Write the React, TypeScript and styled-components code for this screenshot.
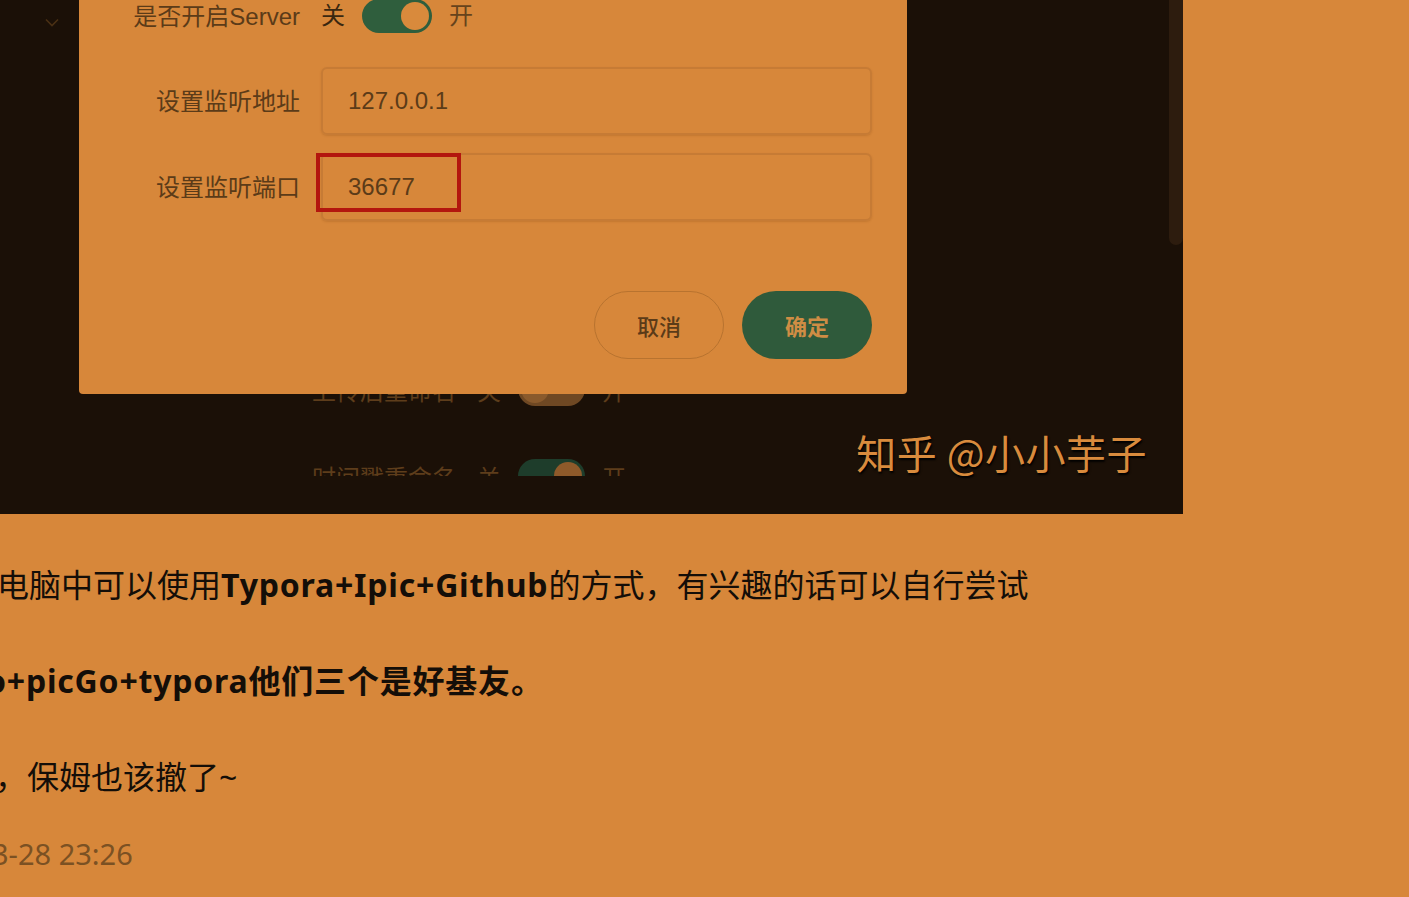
import React from "react";
import styled, { createGlobalStyle, css } from "styled-components";

const Global = createGlobalStyle`
  html, body { margin: 0; padding: 0; background: #d7873a; }
  body {
    font-family: "Noto Sans", "Noto Sans CJK SC", sans-serif;
    overflow: hidden;
  }
  #root { width: 1409px; height: 897px; }
`;

const Page = styled.main`
  width: 1409px;
  height: 897px;
  overflow: hidden;
  background: #d7873a;
`;

/* ---------- screenshot figure ---------- */
const Shot = styled.figure`
  position: relative;
  margin: 0;
  width: 1183px;
  height: 514px;
  background: #1b1007;
  overflow: hidden;
`;

const BackApp = styled.div`
  display: flex;
  height: 476px;
  overflow: hidden;
`;

const Sidebar = styled.aside`
  width: 312px;
  flex: none;
  padding: 10px 0 0 45px;
  box-sizing: border-box;
  color: #4a3014;
`;

const SettingsList = styled.div`
  display: flex;
  flex-direction: column;
  gap: 53px;
  padding-top: 372px;
`;

const BackRow = styled.div`
  display: flex;
  align-items: center;
  height: 34px;
  font-family: "Liberation Sans", "Noto Sans CJK SC", sans-serif;
  font-size: 24px;
  color: #5e3d1b;
`;

const BackLabel = styled.span`
  width: 144px;
  text-align: right;
  margin-right: 21px;
`;

const SwitchTrack = styled.span<{ $tone: "on" | "dimOff" | "dimOn"; $w: number }>`
  position: relative;
  display: inline-block;
  flex: none;
  width: ${(p) => p.$w}px;
  height: 34px;
  border-radius: 17px;
  margin: 0 17px;
  ${(p) =>
    p.$tone === "on"
      ? css`background: #2f5e3d;`
      : p.$tone === "dimOn"
      ? css`background: #1e3d2b;`
      : css`background: #6f4823;`}
  &::after {
    content: "";
    position: absolute;
    top: 3px;
    width: 28px;
    height: 28px;
    border-radius: 50%;
    ${(p) =>
      p.$tone === "on"
        ? css`right: 3px; background: #d98a3c;`
        : p.$tone === "dimOn"
        ? css`right: 3px; background: #8f5a2a;`
        : css`left: 3px; background: #8a5a2c;`}
  }
`;

const Scrollbar = styled.div`
  position: absolute;
  top: 0;
  right: 0;
  width: 14px;
  height: 245px;
  background: #2d1c0e;
  border-radius: 0 0 7px 7px;
`;

const Watermark = styled.figcaption`
  position: absolute;
  right: 36px;
  bottom: 38px;
  font-family: "Noto Sans CJK SC", sans-serif;
  font-size: 40px;
  line-height: 48px;
  color: #d98b3d;
  text-shadow: 1px 2px 2px #000;
  letter-spacing: 0.5px;
`;

/* ---------- dialog ---------- */
const Dialog = styled.section`
  position: absolute;
  left: 79px;
  top: -20px;
  width: 828px;
  height: 414px;
  box-sizing: border-box;
  padding: 19px 35px 0 0;
  background: #d7873a;
  border-radius: 0 0 4px 4px;
  font-family: "Liberation Sans", "Noto Sans CJK SC", sans-serif;
  color: #5b3b18;
  display: flex;
  flex-direction: column;
`;

const Field = styled.div<{ $after?: number }>`
  display: flex;
  align-items: center;
  margin-bottom: ${(p) => p.$after ?? 0}px;
`;

const Label = styled.label`
  width: 221px;
  flex: none;
  text-align: right;
  font-size: 24px;
  line-height: 28px;
  padding-top: 1px;
  margin-right: 21px;
  white-space: nowrap;
`;

const OptText = styled.span<{ $dark?: boolean }>`
  font-size: 24px;
  line-height: 28px;
  color: ${(p) => (p.$dark ? "#3a2710" : "#66431c")};
`;

const InputWrap = styled.div`
  position: relative;
  flex: 1;
`;

const Input = styled.div`
  height: 68px;
  box-sizing: border-box;
  border: 2px solid #c67b35;
  border-radius: 6px;
  padding: 0 25px;
  display: flex;
  align-items: center;
  font-size: 24px;
  color: #5b3b18;
  box-shadow: 0 1px 2px rgba(120, 60, 10, 0.2);
`;

const Annotation = styled.div`
  position: absolute;
  left: -5px;
  top: 0;
  width: 145px;
  height: 59px;
  box-sizing: border-box;
  border: 4px solid #b3160e;
`;

const Actions = styled.div`
  display: flex;
  justify-content: flex-end;
  gap: 18px;
  margin-top: 70px;
`;

const Button = styled.button<{ $primary?: boolean }>`
  width: 130px;
  height: 68px;
  border-radius: 34px;
  font-family: "Noto Sans CJK SC", sans-serif;
  font-size: 22px;
  cursor: pointer;
  ${(p) =>
    p.$primary
      ? css`
          background: #2f5a3b;
          border: none;
          color: #cf8d44;
          font-weight: 700;
        `
      : css`
          background: transparent;
          border: 1px solid #b8732f;
          color: #5b3b18;
          font-weight: 500;
        `}
`;

/* ---------- article text ---------- */
const Article = styled.article`
  display: flex;
  flex-direction: column;
  padding-top: 47px;
  overflow: hidden;
`;

const Para = styled.p<{ $shift: number; $gap: number }>`
  margin: 0 0 ${(p) => p.$gap}px 0;
  font-size: 32px;
  line-height: 48px;
  color: #140e08;
  white-space: nowrap;
  text-indent: ${(p) => p.$shift}px;
  strong { font-weight: 700; letter-spacing: 0.8px; }
`;

const Meta = styled.time<{ $shift: number }>`
  font-size: 29px;
  line-height: 40px;
  color: #7b5123;
  white-space: nowrap;
  text-indent: ${(p) => p.$shift}px;
`;

const Chevron = () => (
  <svg width="14" height="9" viewBox="0 0 14 9" fill="none">
    <path d="M1 1.5 L7 7.5 L13 1.5" stroke="currentColor" strokeWidth="1.6" />
  </svg>
);

export default function App() {
  return (
    <Page>
      <Global />
      <Shot>
        <BackApp>
          <Sidebar>
            <Chevron />
          </Sidebar>
          <SettingsList>
            <BackRow>
              <BackLabel>上传后重命名</BackLabel>
              <span>关</span>
              <SwitchTrack $tone="dimOff" $w={67} />
              <span>开</span>
            </BackRow>
            <BackRow>
              <BackLabel>时间戳重命名</BackLabel>
              <span>关</span>
              <SwitchTrack $tone="dimOn" $w={67} />
              <span>开</span>
            </BackRow>
          </SettingsList>
        </BackApp>
        <Scrollbar />
        <Dialog>
          <Field $after={34}>
            <Label>是否开启Server</Label>
            <OptText $dark>关</OptText>
            <SwitchTrack $tone="on" $w={70} />
            <OptText>开</OptText>
          </Field>
          <Field $after={18}>
            <Label>设置监听地址</Label>
            <InputWrap>
              <Input>127.0.0.1</Input>
            </InputWrap>
          </Field>
          <Field>
            <Label>设置监听端口</Label>
            <InputWrap>
              <Input>36677</Input>
              <Annotation />
            </InputWrap>
          </Field>
          <Actions>
            <Button>取消</Button>
            <Button $primary>确定</Button>
          </Actions>
        </Dialog>
        <Watermark>知乎 @小小芋子</Watermark>
      </Shot>
      <Article>
        <Para $shift={-3} $gap={48}>
          电脑中可以使用<strong>Typora+Ipic+Github</strong>的方式，有兴趣的话可以自行尝试
        </Para>
        <Para $shift={-14} $gap={48}>
          <strong>o+picGo+typora他们三个是好基友。</strong>
        </Para>
        <Para $shift={-5} $gap={33}>
          ，保姆也该撤了~
        </Para>
        <Meta $shift={-8}>3-28 23:26</Meta>
      </Article>
    </Page>
  );
}
